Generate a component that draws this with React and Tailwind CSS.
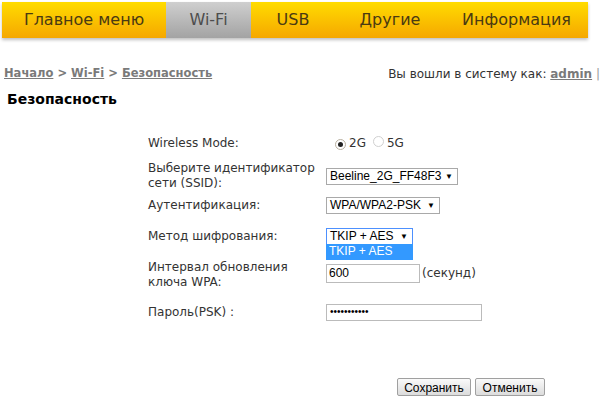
import React from 'react';

const navItems = [
  { name: 'Главное меню', w: 'w-[164px]' },
  { name: 'Wi-Fi', w: 'w-[85px]', active: true },
  { name: 'USB', w: 'w-[84px]' },
  { name: 'Другие', w: 'w-[110px]' },
  { name: 'Информация', w: 'w-[143px]' },
];

function Radio({ checked }) {
  return (
    <span
      className={
        'inline-flex h-[11px] w-[11px] items-center justify-center rounded-full border bg-white ' +
        (checked ? 'border-[#b9b0a0]' : 'border-[#d0d0d0]')
      }
    >
      {checked && <span className="h-[5px] w-[5px] rounded-full bg-[#222]" />}
    </span>
  );
}

function Select({ value, w, focus }) {
  return (
    <div
      className={
        'flex h-[17px] items-center justify-between border bg-white pl-[3px] pr-[4px] text-[12px] text-black ' +
        w +
        (focus ? ' border-[#4d90fe]' : ' border-[#a9a9a9]')
      }
    >
      <span>{value}</span>
      <span className="text-[8px]">▼</span>
    </div>
  );
}

export default function App() {
  return (
    <div className="relative h-[401px] w-[600px] overflow-hidden bg-white font-['DejaVu_Sans',Verdana,sans-serif] text-[#333]">
      {/* Top menu */}
      <nav className="ml-[2px] mt-[2px] flex h-[36px] w-[586px] bg-gradient-to-b from-[#ffdc00] to-[#f5a700] shadow-[0_2px_3px_rgba(0,0,0,0.25)]">
        {navItems.map((item) => (
          <div
            key={item.name}
            className={
              'flex items-center justify-center text-[16px] ' +
              item.w +
              (item.active
                ? ' bg-gradient-to-b from-[#cfcfcf] to-[#a3a3a3] text-[#4d4d4d]'
                : ' text-[#4a3a12]')
            }
          >
            {item.name}
          </div>
        ))}
      </nav>

      {/* Breadcrumb / login */}
      <div className="mt-[27px] flex items-center justify-between pl-[4px]">
        <div className="text-[11.5px] font-bold text-[#7a7a7a]">
          <span className="underline">Начало</span> &gt; <span className="underline">Wi-Fi</span> &gt;{' '}
          <span className="underline">Безопасность</span>
        </div>
        <div className="whitespace-nowrap text-[12px] text-[#333]">
          Вы вошли в систему как: <span className="font-bold text-[#7a7a7a] underline">admin</span>{' '}
          <span className="text-[#999]">|</span>
        </div>
      </div>

      <h1 className="ml-[7px] mt-[6px] text-[14px] font-bold text-black">Безопасность</h1>

      {/* Form */}
      <div className="ml-[148px] mt-[23px] flex flex-col text-[12px] leading-[15px]">
        <div className="flex h-[20px] items-center">
          <div className="w-[178px]">Wireless Mode:</div>
          <div className="flex items-center">
            <span className="ml-[9px]"><Radio checked /></span>
            <span className="ml-[3px]">2G</span>
            <span className="ml-[7px]"><Radio /></span>
            <span className="ml-[3px]">5G</span>
          </div>
        </div>

        <div className="mt-[8px] flex h-[30px] items-center">
          <div className="w-[178px]">
            Выберите идентификатор
            <br />
            сети (SSID):
          </div>
          <div className="font-['Liberation_Sans',Arial,sans-serif]">
            <Select value="Beeline_2G_FF48F3" w="w-[132px]" />
          </div>
        </div>

        <div className="mt-[4px] flex h-[20px] items-center">
          <div className="w-[178px]">Аутентификация:</div>
          <div className="font-['Liberation_Sans',Arial,sans-serif]">
            <Select value="WPA/WPA2-PSK" w="w-[114px]" />
          </div>
        </div>

        <div className="mt-[11px] flex h-[20px] items-center">
          <div className="w-[178px]">Метод шифрования:</div>
          <div className="relative font-['Liberation_Sans',Arial,sans-serif]">
            <Select value="TKIP + AES" w="w-[87px]" focus />
            <div className="absolute left-0 top-[16px] z-10 flex h-[16px] w-[87px] items-center bg-[#3399ff] pl-[3px] text-[12px] text-white">
              TKIP + AES
            </div>
          </div>
        </div>

        <div className="mt-[14px] flex h-[30px] items-start">
          <div className="w-[178px]">
            Интервал обновления
            <br />
            ключа WPA:
          </div>
          <div className="mt-[4px] flex items-center">
            <div className="flex h-[19px] w-[94px] items-center border border-[#bbb] bg-white pl-[2px] font-['Liberation_Sans',Arial,sans-serif] text-[12px] text-black">
              600
            </div>
            <span className="ml-[2px]">(секунд)</span>
          </div>
        </div>

        <div className="mt-[12px] flex h-[20px] items-center">
          <div className="w-[178px]">Пароль(PSK) :</div>
          <div className="flex h-[17px] w-[156px] items-center border border-[#bbb] bg-white pl-[3px] font-['Liberation_Sans',Arial,sans-serif] text-[10px] leading-none text-black">
            •••••••••••
          </div>
        </div>
      </div>

      {/* Buttons */}
      <div className="ml-[397px] mt-[56px] flex gap-[4px] font-['Liberation_Sans',Arial,sans-serif] text-[12px] text-black">
        <button className="h-[18px] w-[74px] rounded-[2px] border border-[#a0a0a0] bg-gradient-to-b from-[#fafafa] to-[#dcdcdc]">
          Сохранить
        </button>
        <button className="h-[18px] w-[70px] rounded-[2px] border border-[#a0a0a0] bg-gradient-to-b from-[#fafafa] to-[#dcdcdc]">
          Отменить
        </button>
      </div>
    </div>
  );
}
